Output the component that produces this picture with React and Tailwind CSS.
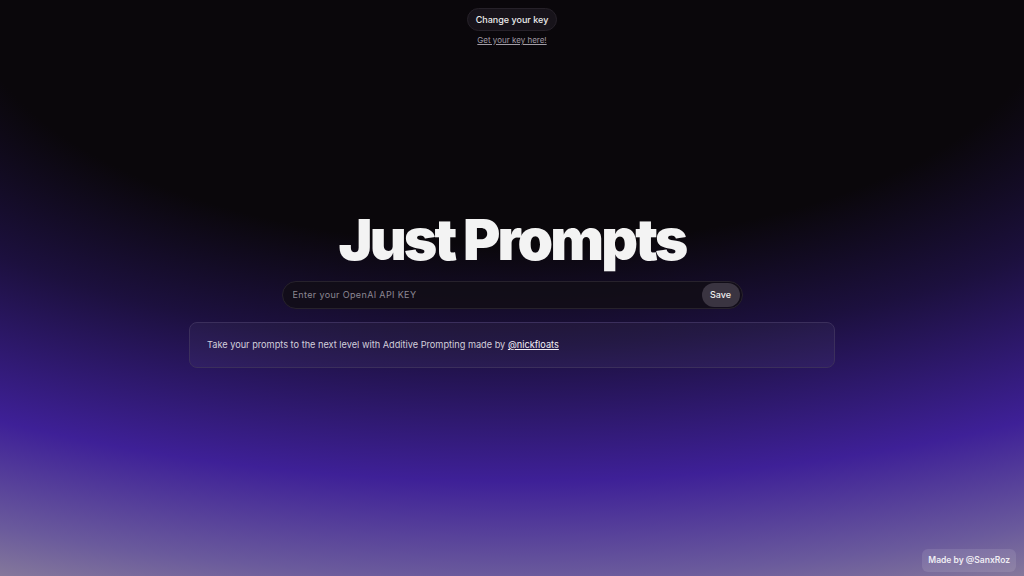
import React from "react";

export default function App() {
  return (
    <div
      className="relative w-full h-screen overflow-hidden flex flex-col items-center text-white bg-[radial-gradient(62%_50%_at_50%_0%,#0a070b_85%,#1c103e_120%,#3e2097_167%,#6a5a9c_200%,#85799b_216%)]"
      style={{ fontFamily: "Inter, 'Noto Sans', sans-serif" }}
    >
      {/* Key controls */}
      <div className="flex flex-col items-center pt-2">
        <button className="h-[23px] px-[8px] rounded-full bg-[#17131a] border border-[#262129] text-[9px] font-medium text-[#ececec]">
          Change your key
        </button>
        <a href="#" className="mt-[3px] text-[8px] text-[#a19ca6] underline">
          Get your key here!
        </a>
      </div>

      {/* Title */}
      <h1 className="mt-[165px] text-[57px] leading-none font-black tracking-[-0.05em] text-[#f3f3f3]">
        Just Prompts
      </h1>

      {/* API key input */}
      <div className="mt-[13px] w-[461px] h-[28px] rounded-full bg-[#120e15]/80 border border-[#27222c] flex items-center pl-[10px] pr-[2px]">
        <input
          className="flex-1 bg-transparent outline-none text-[9px] tracking-[0.04em] text-[#ddd] placeholder:text-[#8c8793]"
          placeholder="Enter your OpenAI API KEY"
        />
        <button className="h-[24px] w-[38px] rounded-full bg-[#3a3441] text-[9px] font-medium text-[#eee]">
          Save
        </button>
      </div>

      {/* Info card */}
      <div className="mt-[13px] w-[646px] h-[46px] rounded-lg border border-[#3b2f5c] bg-white/[0.04] flex items-center px-[17px]">
        <p className="text-[9.2px] text-[#d3cfdb]">
          Take your prompts to the next level with Additive Prompting made by{" "}
          <a href="#" className="underline text-[#f2f0f5]">
            @nickfloats
          </a>
        </p>
      </div>

      {/* Footer badge */}
      <div className="absolute right-[8px] bottom-[4px] h-[23px] px-[6px] rounded-md bg-white/10 flex items-center text-[8.5px] font-semibold text-[#efedf3]">
        Made by @SanxRoz
      </div>
    </div>
  );
}
